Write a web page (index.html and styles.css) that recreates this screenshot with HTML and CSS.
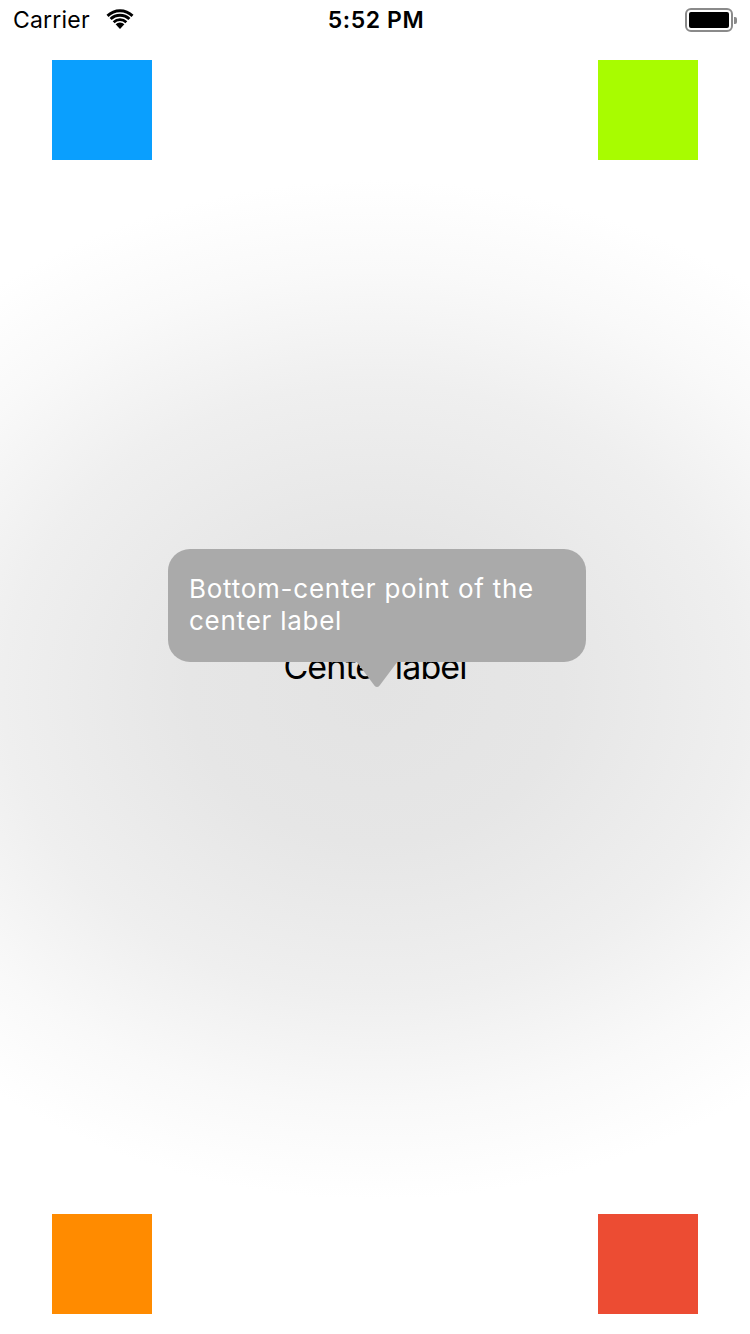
FILE: index.html
```html
<!DOCTYPE html>
<html>
<head>
<meta charset="utf-8">
<link rel="stylesheet" href="styles.css">
</head>
<body>
<div class="screen">
  <div class="statusbar">
    <div class="sb-left">
      <span class="carrier">Carrier</span>
      <svg class="wifi" width="28" height="20" viewBox="0 0 28 20">
        <path d="M14 20 L9.6 15.2 A6.5 6.5 0 0 1 18.4 15.2 Z" fill="#000"/>
        <path d="M6.7 12.2 A10.6 10.6 0 0 1 21.3 12.2 L19.4 14.2 A7.9 7.9 0 0 0 8.6 14.2 Z" fill="#000"/>
        <path d="M3.6 9 A15 15 0 0 1 24.4 9 L22.4 11.1 A12.1 12.1 0 0 0 5.6 11.1 Z" fill="#000"/>
        <path d="M0.5 5.8 A19.5 19.5 0 0 1 27.5 5.8 L25.5 7.9 A16.5 16.5 0 0 0 2.5 7.9 Z" fill="#000"/>
      </svg>
    </div>
    <div class="time">5:52 PM</div>
    <div class="sb-right">
      <div class="battery"><div class="battery-fill"></div></div>
      <div class="battery-nub"></div>
    </div>
  </div>
  <div class="row row-top">
    <div class="square blue"></div>
    <div class="square green"></div>
  </div>
  <div class="row row-bottom">
    <div class="square orange"></div>
    <div class="square red"></div>
  </div>
  <div class="center-label">
    Center label
    <div class="tooltip">
      <div class="bubble">Bottom-center point of the center label</div>
      <svg class="arrow" width="42" height="27" viewBox="0 0 42 27">
        <path d="M0 0 L42 0 L23.6 24.6 Q21 27.6 18.4 24.6 Z" fill="#aaaaaa"/>
      </svg>
    </div>
  </div>
</div>
</body>
</html>
```
FILE: styles.css
```css
html, body {
  margin: 0;
  padding: 0;
}
body {
  width: 750px;
  height: 1334px;
  overflow: hidden;
  font-family: Inter, "Noto Sans", "Liberation Sans", sans-serif;
  background: #fff;
}
.screen {
  width: 750px;
  height: 1334px;
  display: grid;
  grid-template-rows: 40px 140px 1fr 120px;
  background: radial-gradient(ellipse 620px 510px at 375px 690px, #e3e3e3 0%, #e6e6e6 30%, #efefef 60%, #f9f9f9 82%, #ffffff 100%);
}
.statusbar {
  grid-row: 1;
  grid-column: 1;
  display: flex;
  align-items: center;
  justify-content: space-between;
  padding: 0 13px;
  height: 40px;
  position: relative;
}
.sb-left {
  display: flex;
  align-items: center;
  gap: 16px;
  width: 200px;
}
.carrier {
  font-size: 23px;
  color: #000;
  letter-spacing: 0.2px;
}
.wifi {
  margin-top: -2px;
}
.time {
  font-size: 23px;
  font-weight: 600;
  color: #000;
  letter-spacing: 0.6px;
  margin-left: 2px;
}
.sb-right {
  width: 200px;
  display: flex;
  justify-content: flex-end;
  align-items: center;
  gap: 1px;
}
.battery {
  width: 40px;
  height: 16px;
  border: 2px solid #8a8a8a;
  border-radius: 6px;
  padding: 2px;
  display: flex;
  box-sizing: content-box;
}
.battery-fill {
  flex: 1;
  background: #000;
  border-radius: 2px;
}
.battery-nub {
  width: 3px;
  height: 7px;
  background: #8a8a8a;
  border-radius: 0 2px 2px 0;
}
.row {
  grid-column: 1;
  display: flex;
  justify-content: space-between;
  padding: 0 52px;
}
.row-top {
  grid-row: 2;
  padding-top: 20px;
}
.row-bottom {
  grid-row: 4;
  align-items: flex-end;
  padding-bottom: 20px;
}
.square {
  width: 100px;
  height: 100px;
}
.blue { background: #0a9ffe; }
.green { background: #a8fc00; }
.orange { background: #ff8b00; }
.red { background: #ec4c33; }
.center-label {
  grid-row: 1 / -1;
  grid-column: 1;
  place-self: center;
  position: relative;
  font-size: 34px;
  line-height: 42px;
  color: #000;
  letter-spacing: -0.9px;
  white-space: nowrap;
}
.tooltip {
  position: absolute;
  bottom: 0;
  left: 50%;
  transform: translateX(calc(-50% + 2px));
  display: flex;
  flex-direction: column;
  align-items: center;
}
.bubble {
  width: 418px;
  box-sizing: border-box;
  background: #aaaaaa;
  color: #fff;
  border-radius: 22px;
  padding: 24px 21px 25px;
  font-size: 26px;
  line-height: 32px;
  letter-spacing: 0.75px;
  white-space: normal;
}
.arrow {
  display: block;
  margin-top: -1px;
}
```
